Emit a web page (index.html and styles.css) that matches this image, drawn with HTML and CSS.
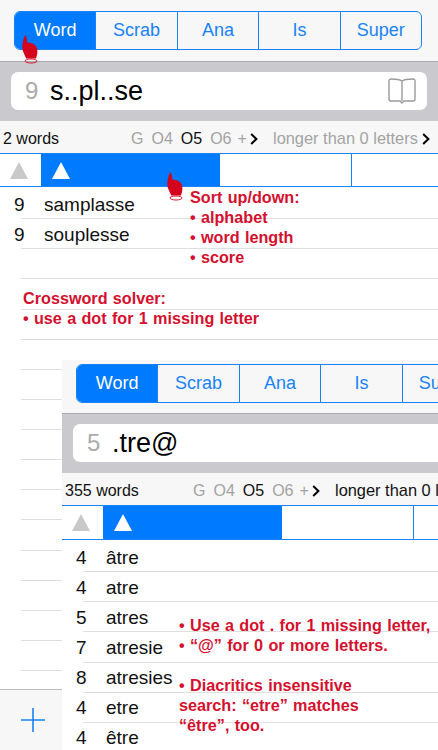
FILE: index.html
```html
<!DOCTYPE html>
<html lang="fr">
<head>
    <meta charset="UTF-8">
    <meta name="viewport" content="width=device-width, initial-scale=1.0">
    <title>Word search</title>
    <link rel="stylesheet" href="styles.css">
</head>
<body>
    <div class="screen">
        <div class="top-bar">
            <div class="tabs">
                <div class="tab active">Word</div>
                <div class="tab">Scrab</div>
                <div class="tab">Ana</div>
                <div class="tab">Is</div>
                <div class="tab">Super</div>
            </div>
        </div>
        <div class="search-band">
            <div class="search-box">
                <span class="search-count">9</span>
                <span class="search-query">s..pl..se</span>
                <svg class="book" viewBox="0 0 28 26" width="28" height="26">
                    <path d="M14 3C12 1.6 9 1 3 1C1.8 1 1 1.8 1 3V21C1 22.2 1.8 23 3 23H12L14 25L16 23H25C26.2 23 27 22.2 27 21V3C27 1.8 26.2 1 25 1C19 1 16 1.6 14 3ZM14 3V23" fill="none" stroke="#9a9a9a" stroke-width="1.4"/>
                </svg>
            </div>
        </div>
        <div class="info-row">
            <span class="word-count">2 words</span>
            <div class="formats">
                <span>G</span><span>O4</span><span class="current">O5</span><span>O6</span><span class="more">+</span>
                <svg class="chevron" viewBox="0 0 8 12" width="8" height="12"><path d="M1.2 1L6.4 6L1.2 11" fill="none" stroke="#000" stroke-width="2"/></svg>
            </div>
            <span class="length-filter">longer than 0 letters</span>
            <svg class="chevron" viewBox="0 0 8 12" width="8" height="12"><path d="M1.2 1L6.4 6L1.2 11" fill="none" stroke="#000" stroke-width="2"/></svg>
        </div>
        <div class="sort-bar">
            <div class="sort-cell sort-score"><span class="triangle"></span></div>
            <div class="sort-cell sort-word"><span class="triangle"></span></div>
            <div class="sort-cell sort-length"></div>
            <div class="sort-cell sort-rest"></div>
        </div>
        <div class="word-list">
            <div class="word-row"><span class="word-len">9</span><span class="word-text">samplasse</span></div>
            <div class="word-row"><span class="word-len">9</span><span class="word-text">souplesse</span></div>
            <div class="word-row"></div>
            <div class="word-row"></div>
            <div class="word-row"></div>
            <div class="word-row"></div>
            <div class="word-row"></div>
            <div class="word-row"></div>
            <div class="word-row"></div>
            <div class="word-row"></div>
            <div class="word-row"></div>
            <div class="word-row"></div>
            <div class="word-row"></div>
            <div class="word-row"></div>
            <div class="word-row"></div>
            <div class="word-row"></div>
        </div>
        <div class="bottom-bar">
            <svg viewBox="0 0 24 24" width="24" height="24"><path d="M12 0V24M0 12H24" stroke="#1a82f7" stroke-width="1.6"/></svg>
        </div>
    </div>

    <svg class="hand hand-tab" viewBox="0 0 16 29" width="16" height="29">
        <path d="M3 0C4.4 1 5 4 5.4 7.5C8.5 7.5 11.5 8.5 13.5 10.5C15.6 12.6 15.8 17 15 20L14 23.5H4.2C2.8 19.5 .3 16.5 .3 12C.3 8 1.5 4 3 0Z" fill="#d4021d"/>
        <ellipse cx="9" cy="26" rx="6" ry="2" fill="none" stroke="#d4021d" stroke-width=".9"/>
    </svg>
    <svg class="hand hand-sort" viewBox="0 0 16 29" width="16" height="29">
        <path d="M3 0C4.4 1 5 4 5.4 7.5C8.5 7.5 11.5 8.5 13.5 10.5C15.6 12.6 15.8 17 15 20L14 23.5H4.2C2.8 19.5 .3 16.5 .3 12C.3 8 1.5 4 3 0Z" fill="#d4021d"/>
        <ellipse cx="9" cy="26" rx="6" ry="2" fill="none" stroke="#d4021d" stroke-width=".9"/>
    </svg>

    <div class="note note-sort">Sort up/down:<br>• alphabet<br>• word length<br>• score</div>
    <div class="note note-crossword">Crossword solver:<br>• use a dot for 1 missing letter</div>

    <div class="screen screen-front">
        <div class="top-bar">
            <div class="tabs">
                <div class="tab active">Word</div>
                <div class="tab">Scrab</div>
                <div class="tab">Ana</div>
                <div class="tab">Is</div>
                <div class="tab">Super</div>
            </div>
        </div>
        <div class="search-band">
            <div class="search-box">
                <span class="search-count">5</span>
                <span class="search-query">.tre@</span>
            </div>
        </div>
        <div class="info-row">
            <span class="word-count">355 words</span>
            <div class="formats">
                <span>G</span><span>O4</span><span class="current">O5</span><span>O6</span><span class="more">+</span>
                <svg class="chevron" viewBox="0 0 8 12" width="8" height="12"><path d="M1.2 1L6.4 6L1.2 11" fill="none" stroke="#000" stroke-width="2"/></svg>
            </div>
            <span class="length-filter">longer than 0 letters</span>
        </div>
        <div class="sort-bar">
            <div class="sort-cell sort-score"><span class="triangle"></span></div>
            <div class="sort-cell sort-word"><span class="triangle"></span></div>
            <div class="sort-cell sort-length"></div>
            <div class="sort-cell sort-rest"></div>
        </div>
        <div class="word-list">
            <div class="word-row"><span class="word-len">4</span><span class="word-text">âtre</span></div>
            <div class="word-row"><span class="word-len">4</span><span class="word-text">atre</span></div>
            <div class="word-row"><span class="word-len">5</span><span class="word-text">atres</span></div>
            <div class="word-row"><span class="word-len">7</span><span class="word-text">atresie</span></div>
            <div class="word-row"><span class="word-len">8</span><span class="word-text">atresies</span></div>
            <div class="word-row"><span class="word-len">4</span><span class="word-text">etre</span></div>
            <div class="word-row"><span class="word-len">4</span><span class="word-text">être</span></div>
        </div>
    </div>

    <div class="note note-pattern">• Use a dot . for 1 missing letter,<br>• “@” for 0 or more letters.<br><br>• Diacritics insensitive<br>search: “etre” matches<br>“être”, too.</div>
</body>
</html>
```

FILE: styles.css
```css
* {
    box-sizing: border-box;
}

html, body {
    margin: 0;
    width: 438px;
    height: 750px;
    overflow: hidden;
    background-color: #FFFFFF;
    font-family: "Liberation Sans", Arial, sans-serif;
    color: #111111;
}

.screen {
    display: flex;
    flex-direction: column;
    width: 438px;
    height: 750px;
}

/* second phone view, laid over the first one */
.screen-front {
    position: absolute;
    left: 62px;
    top: 360px;
    height: 390px;
    overflow: hidden;
    background-color: #FFFFFF;
}

.top-bar {
    flex: none;
    padding: 11px 16px 11px 14px;
    background-color: #F7F7F7;
    border-bottom: 1px solid #A8A8A8;
}

.screen-front .top-bar {
    padding-top: 4px;
    padding-bottom: 10px;
}

.tabs {
    display: flex;
    height: 39px;
    border: 1px solid #1A82F7;
    border-radius: 6px;
    overflow: hidden;
}

.tab {
    flex: 1;
    display: flex;
    justify-content: center;
    align-items: center;
    font-size: 18px;
    color: #1A82F7;
    border-left: 1px solid #1A82F7;
}

.tab:first-child {
    border-left: none;
}

.tab.active {
    background-color: #007AFF;
    color: white;
}

.search-band {
    flex: none;
    height: 59px;
    padding: 10px 11px 11px;
    background-color: #C9C9CE;
}

.search-box {
    display: flex;
    align-items: center;
    height: 38px;
    padding: 0 11px 0 14px;
    background-color: white;
    border-radius: 7px;
}

.search-count {
    width: 25px;
    font-size: 24px;
    color: #ABABAB;
}

.search-query {
    flex: 1;
    font-size: 27px;
    color: #000000;
}

.info-row {
    flex: none;
    display: flex;
    align-items: center;
    height: 32px;
    padding: 3px 0 0 3px;
    background-color: #F7F7F7;
    font-size: 16px;
    white-space: nowrap;
}

.word-count {
    width: 128px;
}

.formats {
    display: flex;
    align-items: center;
    gap: 8px;
    width: 142px;
    color: #A3A3A3;
}

.formats .current {
    color: #111111;
}

.formats .more {
    margin-left: -2px;
    margin-right: -5px;
}

.length-filter {
    font-size: 16.4px;
    color: #A3A3A3;
    margin-right: 4px;
}

.screen-front .length-filter {
    color: #111111;
}

.sort-bar {
    flex: none;
    display: flex;
    height: 34px;
    border-top: 1px solid #1A82F7;
    border-bottom: 1px solid #1A82F7;
}

.screen-front .sort-bar {
    height: 35px;
}

.sort-cell {
    display: flex;
    align-items: center;
}

.sort-score {
    width: 41px;
    padding-left: 10px;
}

.sort-word {
    width: 179px;
    padding-left: 11px;
    background-color: #007AFF;
}

.sort-length {
    width: 132px;
    border-right: 1px solid #1A82F7;
}

.sort-rest {
    flex: 1;
}

.triangle {
    width: 0;
    height: 0;
    border-left: 9.5px solid transparent;
    border-right: 9.5px solid transparent;
    border-bottom: 17px solid #C8C8C8;
}

.sort-word .triangle {
    border-bottom-color: white;
}

.word-list {
    flex: 1;
    min-height: 0;
    overflow: hidden;
    padding-top: 2px;
}

.word-row {
    display: flex;
    align-items: center;
    height: 30.13px;
    margin-left: 21px;
    padding-top: 2px;
    border-bottom: 1px solid #DFDFDF;
    font-size: 19px;
}

.word-len {
    width: 30px;
    margin-left: -7px;
}

.bottom-bar {
    flex: none;
    display: flex;
    align-items: center;
    height: 61px;
    padding-left: 21px;
    background-color: #F7F7F7;
    border-top: 1px solid #BDBDBD;
}

.hand {
    position: absolute;
}

.hand-tab {
    left: 22px;
    top: 35px;
}

.hand-sort {
    left: 167px;
    top: 172px;
}

.note {
    position: absolute;
    font-size: 16.2px;
    font-weight: bold;
    word-spacing: 0.8px;
    line-height: 20px;
    color: #D4102E;
    white-space: nowrap;
}

.note-sort {
    left: 190px;
    top: 187px;
}

.note-crossword {
    left: 23px;
    top: 288px;
}

.note-pattern {
    left: 179px;
    top: 615px;
}
```
